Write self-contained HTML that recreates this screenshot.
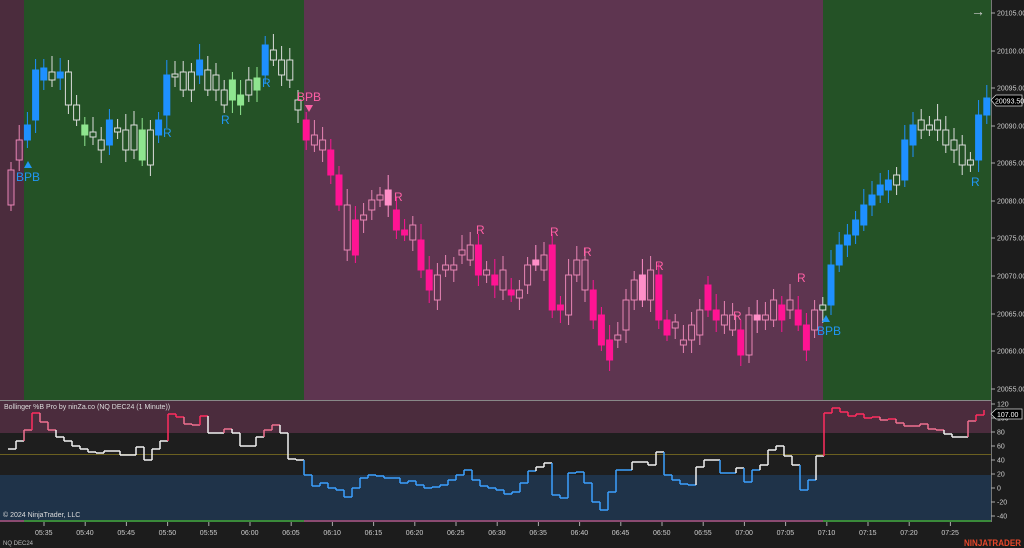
<!DOCTYPE html><html><head><meta charset="utf-8"><style>
body{margin:0;width:1024px;height:548px;background:#1c1c1c;overflow:hidden;font-family:"Liberation Sans",sans-serif}
svg{position:absolute;left:0;top:0}
</style></head><body>
<svg id="s" width="1024" height="548" xmlns="http://www.w3.org/2000/svg" font-family="Liberation Sans, sans-serif">
<rect x="0" y="0" width="1024" height="548" fill="#1c1c1c"/>
<rect x="0" y="0" width="24" height="400" fill="#4b2c3d"/>
<rect x="24" y="0" width="280" height="400" fill="#245226"/>
<rect x="304" y="0" width="519" height="400" fill="#5e3550"/>
<rect x="823" y="0" width="168" height="400" fill="#245226"/>
<rect x="0" y="401" width="991" height="32" fill="#4b2c3d"/>
<rect x="0" y="433" width="991" height="42" fill="#1e1e1e"/>
<rect x="0" y="475" width="991" height="45" fill="#1f3349"/>
<line x1="0" y1="454.5" x2="991" y2="454.5" stroke="#6b6020" stroke-width="1"/>
<line x1="0" y1="400.5" x2="991" y2="400.5" stroke="#888" stroke-width="1"/>
<rect x="0" y="520" width="24" height="2" fill="#8a4a70"/><rect x="24" y="520" width="280" height="2" fill="#3a8a3a"/><rect x="304" y="520" width="519" height="2" fill="#8a4a70"/><rect x="823" y="520" width="168" height="2" fill="#3a8a3a"/>
<line x1="991.5" y1="0" x2="991.5" y2="522" stroke="#777"/>
<g id="c"></g>
<g font-size="12" text-anchor="start">
<text x="16" y="181" fill="#2196f3">BPB</text><polygon points="24,168 28,161 32,168" fill="#2196f3"/>
<text x="297" y="101" fill="#ff5fa5">BPB</text><polygon points="305,105 313,105 309,112" fill="#ff5fa5"/>
<text x="817" y="335" fill="#2196f3">BPB</text><polygon points="822,322 826,315 830,322" fill="#2196f3"/>
<text x="163" y="137" fill="#2196f3">R</text><text x="221" y="124" fill="#2196f3">R</text><text x="262" y="87" fill="#2196f3">R</text>
<text x="394" y="201" fill="#ff5fa5">R</text><text x="476" y="234" fill="#ff5fa5">R</text><text x="550" y="236" fill="#ff5fa5">R</text><text x="583" y="256" fill="#ff5fa5">R</text><text x="655" y="270" fill="#ff5fa5">R</text><text x="733" y="320" fill="#ff5fa5">R</text><text x="797" y="282" fill="#ff5fa5">R</text>
<text x="971" y="186" fill="#2196f3">R</text>
</g>
<text x="971" y="16" fill="#ccc" font-size="14">→</text>
<g id="ax" font-size="7" fill="#ccc"></g>
<text x="4" y="409" font-size="7" fill="#ddd">Bollinger %B Pro by ninZa.co (NQ DEC24 (1 Minute))</text>
<text x="3" y="517" font-size="7" fill="#ddd">© 2024 NinjaTrader, LLC</text>
<text x="3" y="545" font-size="6" fill="#bbb">NQ DEC24</text>
<text x="964" y="546" font-size="9" font-weight="bold" fill="#e8472a" textLength="57" lengthAdjust="spacingAndGlyphs">NINJATRADER</text>
<polygon points="991,100 996,95 1022,95 1022,106 996,106" fill="#000" stroke="#ddd" stroke-width="0.7"/>
<text x="995" y="103.5" font-size="7" fill="#fff">20093.50</text>
<polygon points="991,414 996,409 1022,409 1022,419 996,419" fill="#000" stroke="#ddd" stroke-width="0.7"/>
<text x="997" y="417" font-size="7" fill="#fff">107.00</text>
</svg>
<script>
var ns="http://www.w3.org/2000/svg",g=document.getElementById('c'),ax=document.getElementById('ax');
function el(t,a,p){var e=document.createElementNS(ns,t);for(var k in a)e.setAttribute(k,a[k]);(p||g).appendChild(e);return e;}
var d=[[170,205,'P'],[140,160,'P'],[125,140,'B'],[70,120,'B'],[68,80,'B'],[72,80,'W'],[72,78,'B'],[72,105,'W'],[105,120,'W'],[125,135,'G'],[132,137,'W'],[140,150,'W'],[120,145,'B'],[128,132,'W'],[130,150,'W'],[125,150,'W'],[130,160,'G'],[130,165,'W'],[120,135,'B'],[75,115,'B'],[74,77,'W'],[72,90,'W'],[72,90,'W'],[60,75,'B'],[70,90,'W'],[75,90,'W'],[90,105,'W'],[80,100,'G'],[95,105,'G'],[80,95,'W'],[78,90,'G'],[45,75,'B'],[50,60,'W'],[60,75,'W'],[60,80,'W'],[100,110,'W'],[120,140,'M'],[135,145,'P'],[140,150,'P'],[150,175,'M'],[175,205,'M'],[205,250,'P'],[220,255,'M'],[215,220,'P'],[200,210,'P'],[195,200,'P'],[190,205,'L'],[210,230,'M'],[230,235,'M'],[225,240,'P'],[240,270,'M'],[270,290,'M'],[275,300,'P'],[265,270,'P'],[265,270,'P'],[250,255,'P'],[245,260,'P'],[245,275,'M'],[270,275,'P'],[275,285,'M'],[270,290,'P'],[290,295,'M'],[290,298,'P'],[265,285,'P'],[260,265,'L'],[255,270,'P'],[245,310,'M'],[305,310,'M'],[275,315,'P'],[260,275,'P'],[260,290,'P'],[290,320,'M'],[315,345,'M'],[340,360,'M'],[335,340,'P'],[300,330,'P'],[280,300,'P'],[275,300,'L'],[270,300,'P'],[275,320,'M'],[320,335,'M'],[322,328,'P'],[340,345,'P'],[325,340,'P'],[310,335,'P'],[285,310,'M'],[310,320,'M'],[315,325,'P'],[315,330,'P'],[330,355,'M'],[315,355,'P'],[315,320,'L'],[315,320,'P'],[300,320,'P'],[305,320,'M'],[300,310,'P'],[310,325,'M'],[325,350,'M'],[310,330,'P'],[305,310,'W'],[265,305,'B'],[245,265,'B'],[235,245,'B'],[220,235,'B'],[205,225,'B'],[195,205,'B'],[185,195,'B'],[180,190,'B'],[175,185,'W'],[140,180,'B'],[125,145,'B'],[120,130,'W'],[125,130,'W'],[120,130,'W'],[130,145,'W'],[140,150,'W'],[145,165,'W'],[160,165,'W'],[115,160,'B'],[98,115,'B']];
var col={B:['#1e90ff',1],G:['#8fe58f',1],W:['#dcdcdc',0],M:['#ff1493',1],P:['#e885b5',0],L:['#ff8fc8',1]};
d.forEach(function(c,i){var x=11+i*8.2,t=c[0],b=c[1],k=col[c[2]];
el('line',{x1:x,x2:x,y1:t-8-(i*7%9),y2:b+6+(i*5%8),stroke:k[0],'stroke-width':1});
el('rect',{x:x-3,y:t,width:6,height:Math.max(b-t,1.5),fill:k[1]?k[0]:(c[2]=='W'?'#245226':'#5e3550'),stroke:k[0],'stroke-width':1});});
var q=[8,449,16,441,24,430,32,413,40,422,48,430,56,437,64,441,72,446,80,449,88,452,96,453,104,451,112,451,120,455,128,455,136,447,144,460,152,449,160,441,168,414,176,417,184,424,192,425,200,416,208,433,216,433,224,429,232,433,240,446,248,446,256,437,264,430,272,425,280,433,288,459,296,460,304,475,312,486,320,483,328,488,336,490,344,497,352,488,360,478,368,475,376,476,384,478,392,478,400,483,408,481,416,485,424,488,432,487,440,485,448,480,456,475,464,470,472,480,480,486,488,488,496,490,504,494,512,492,520,483,528,471,536,467,544,463,552,495,560,498,568,473,576,472,584,483,592,502,600,510,608,492,616,470,624,470,632,462,640,462,648,465,656,452,664,475,672,480,680,484,688,485,696,467,704,460,712,460,720,473,728,473,736,468,744,482,752,470,760,465,768,450,776,446,784,456,792,465,800,490,808,480,816,456,824,413,832,408,840,412,848,416,856,414,864,418,872,417,880,420,888,419,896,423,904,426,912,426,920,424,928,429,936,430,944,434,952,437,960,437,968,421,976,415,984,410];
function cc(y){return y<420?'#ff2d5f':y<433?'#f07090':y<470?'#f0f0f0':'#3ba0ff';}
for(var i=0;i+2<q.length;i+=2){var x=q[i],y=q[i+1],x2=q[i+2],y2=q[i+3];
el('line',{x1:x,x2:x2,y1:y,y2:y,stroke:cc(y),'stroke-width':1.5});
el('line',{x1:x2,x2:x2,y1:y,y2:y2,stroke:cc(y2),'stroke-width':1.5});}
var pr=[[20105,13],[20100,51],[20095,88],[20090,126],[20085,163],[20080,201],[20075,238],[20070,276],[20065,314],[20060,351],[20055,389]];
pr.forEach(function(a){el('line',{x1:991,x2:995,y1:a[1],y2:a[1],stroke:'#aaa'},ax);var t=el('text',{x:997,y:a[1]+2.5},ax);t.textContent=a[0].toFixed(2);});
var iv=[120,100,80,60,40,20,0,-20,-40];iv.forEach(function(v,i){var y=404+i*14;el('line',{x1:991,x2:995,y1:y,y2:y,stroke:'#aaa'},ax);var t=el('text',{x:997,y:y+2.5},ax);t.textContent=v;});
var tm=['05:35','05:40','05:45','05:50','05:55','06:00','06:05','06:10','06:15','06:20','06:25','06:30','06:35','06:40','06:45','06:50','06:55','07:00','07:05','07:10','07:15','07:20','07:25'];
tm.forEach(function(s,i){var x=44+i*41.2;el('line',{x1:x,x2:x,y1:522,y2:526,stroke:'#aaa'},ax);var t=el('text',{x:x-9,y:535},ax);t.textContent=s;});
</script>
</body></html>
